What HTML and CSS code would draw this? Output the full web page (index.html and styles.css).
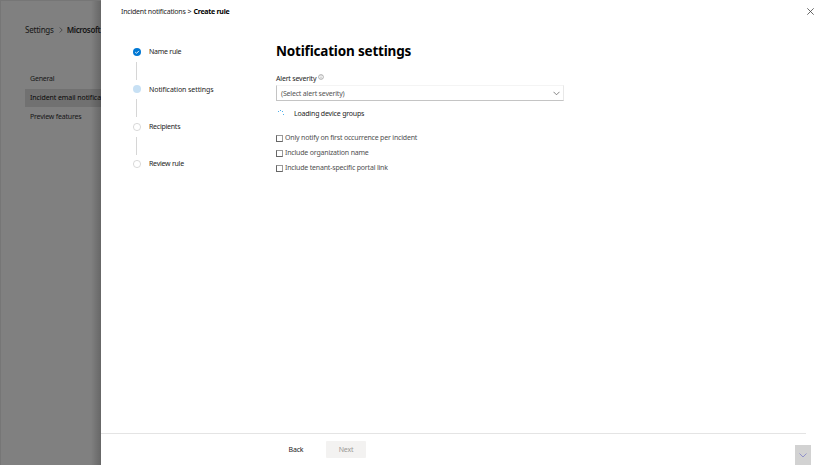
FILE: index.html
```
<!DOCTYPE html>
<html lang="en">
<head>
<meta charset="utf-8">
<title>Create rule</title>
<link rel="stylesheet" href="styles.css">
</head>
<body>
<div class="app">
  <aside class="backdrop">
    <div class="crumbs"><span class="crumb-settings">Settings</span><svg class="crumb-sep" viewBox="0 0 4 6"><path d="M.7.5 3.2 3 .7 5.5"/></svg><b>Microsoft</b></div>
    <nav class="side-nav">
      <a>General</a>
      <a class="selected">Incident email notifica</a>
      <a>Preview features</a>
    </nav>
  </aside>
  <main class="panel">
    <header class="panel-head">
      <div class="path"><span class="path-root">Incident notifications</span><span class="gt">&gt;</span><b>Create rule</b></div>
      <svg class="close" viewBox="0 0 7 7"><path d="M.3.3 6.7 6.7M6.7.3.3 6.7"/></svg>
    </header>
    <div class="body">
      <ol class="steps">
        <li><svg class="dot" viewBox="0 0 8 8"><circle class="done" cx="4" cy="4" r="4"/><path class="check" d="M2.2 4.1 3.5 5.3 5.9 2.9"/></svg><span>Name rule</span></li>
        <li><svg class="dot" viewBox="0 0 8 8"><circle class="current" cx="4" cy="4" r="4"/></svg><span class="active">Notification settings</span></li>
        <li><svg class="dot" viewBox="0 0 8 8"><circle class="todo" cx="4" cy="4" r="3.6"/></svg><span>Recipients</span></li>
        <li><svg class="dot" viewBox="0 0 8 8"><circle class="todo" cx="4" cy="4" r="3.6"/></svg><span>Review rule</span></li>
      </ol>
      <section class="form">
        <h1>Notification settings</h1>
        <div class="label"><span>Alert severity</span><svg viewBox="0 0 6 6"><circle cx="3" cy="3" r="2.4"/><path d="M3 2.5V4.5M3 1.4V2"/></svg></div>
        <div class="select"><span>(Select alert severity)</span><svg viewBox="0 0 7 5"><path d="M.5.8 3.5 3.8 6.5.8"/></svg></div>
        <div class="loading"><svg viewBox="0 0 8 8"><path d="M2 2.5h1M4 1.5h1M6 2.5h1M7 5.5h1"/></svg><span>Loading device groups</span></div>
        <div class="check-row"><i></i><span>Only notify on first occurrence per incident</span></div>
        <div class="check-row"><i></i><span>Include organization name</span></div>
        <div class="check-row"><i></i><span>Include tenant-specific portal link</span></div>
      </section>
    </div>
    <footer class="footer">
      <div class="back">Back</div>
      <div class="next">Next</div>
      <div class="expand"><svg viewBox="0 0 8 5"><path d="M.5.5 4 4 7.5.5"/></svg></div>
    </footer>
  </main>
</div>
</body>
</html>
```
FILE: styles.css
```
* { box-sizing: border-box; }
body { margin: 0; background: #fff; font: 7px/10px "Noto Sans", "Open Sans", sans-serif; letter-spacing: -.19px; color: #242424; }
svg { fill: none; flex: none; display: block; }
span, b, a { white-space: nowrap; }
.app { display: flex; width: 826px; height: 466px; overflow: hidden; }
.backdrop { width: 101px; height: 465px; flex: none; overflow: hidden; background: linear-gradient(to right, transparent 90px, rgba(0,0,0,.2)), #808080; border-left: 1px solid #767676; border-top: 1px solid #767676; padding: 24px 0 0 24px; color: #161616; }
.crumbs { display: flex; align-items: center; height: 10px; font-size: 8px; }
.crumbs span { letter-spacing: -.22px; }
.crumb-sep { width: 4px; height: 6px; margin: 0 4px 0 5px; stroke: #333; stroke-width: .7; }
.crumbs b { font-weight: 600; letter-spacing: -.36px; }
.side-nav { margin-top: 35px; }
.side-nav a { display: block; height: 18px; line-height: 18px; padding-left: 5px; }
.side-nav .selected { background: linear-gradient(to right, transparent 65px, rgba(0,0,0,.2) 76px), #717171; margin: 1px 0; color: #080808; letter-spacing: -.09px; }
.panel { flex: 1; min-width: 0; background: #fff; display: flex; flex-direction: column; }
.panel-head { display: flex; justify-content: space-between; height: 23px; padding: 7px 12px 0 20px; }
.path { display: flex; }
.path-root { letter-spacing: -.22px; }
.gt { margin: 0 2px; }
.path b { font-weight: 700; color: #000; letter-spacing: -.26px; }
.close { width: 7px; height: 7px; margin-top: 1px; stroke: #444; stroke-width: .8; }
.body { display: flex; flex: 1; }
.steps { list-style: none; margin: 0; padding: 24px 0 0 32px; width: 175px; letter-spacing: -.25px; }
.steps li { display: flex; height: 37.3px; gap: 8px; position: relative; }
.steps li:not(:last-child)::after { content: ""; position: absolute; left: 3px; top: 15px; width: 1px; height: 18px; background: #d6d6d6; }
.steps .active { letter-spacing: -.08px; padding-top: .7px; }
.dot { width: 8px; height: 8px; margin-top: 1px; }
.done { fill: #0078d4; }
.current { fill: #c7e0f4; }
.todo { stroke: #c8c8c8; stroke-width: .7; }
.check { stroke: #fff; stroke-width: .9; }
.form { width: 288px; padding-top: 18px; }
h1 { margin: 0; font-size: 13.5px; line-height: 20px; font-weight: 700; letter-spacing: -.18px; color: #000; white-space: nowrap; }
.label { display: flex; margin-top: 13px; height: 11px; }
.label svg { width: 6px; height: 6px; margin: 0 0 0 2px; stroke: #666; stroke-width: .5; }
.select { display: flex; justify-content: space-between; align-items: center; height: 16px; border: 1px solid #c4c4c4; border-top-color: #f4f4f4; border-right-color: #e8e8e8; padding: 1px 3px 0 4px; color: #555; }
.select svg { width: 7px; height: 5px; stroke: #666; stroke-width: .8; }
.loading { display: flex; height: 10px; margin: 8px 0 14px; }
.loading svg { width: 8px; height: 8px; margin: 0 10px 0 0; stroke: #50b0ea; stroke-width: 1; }
.check-row { display: flex; height: 15.2px; color: #505050; }
.check-row i { width: 7px; height: 7px; border: 1px solid #666; border-top-color: #999; border-right-color: #999; margin: 2px 2px 0 0; flex: none; }
.footer { display: flex; height: 33px; border-top: 1px solid #e4e4e4; margin-right: 20px; padding: 7px 0 0 175px; }
.back, .next { width: 40px; height: 17px; line-height: 18px; text-align: center; }
.next { margin-left: 10px; background: #f3f2f1; color: #9b9997; border-radius: 1px; }
.expand { display: flex; align-items: center; justify-content: center; width: 16px; height: 20px; margin: 4px -5px 0 auto; background: #d2d2d2; }
.expand svg { width: 8px; height: 5px; stroke: #8080c8; stroke-width: .8; }
```
